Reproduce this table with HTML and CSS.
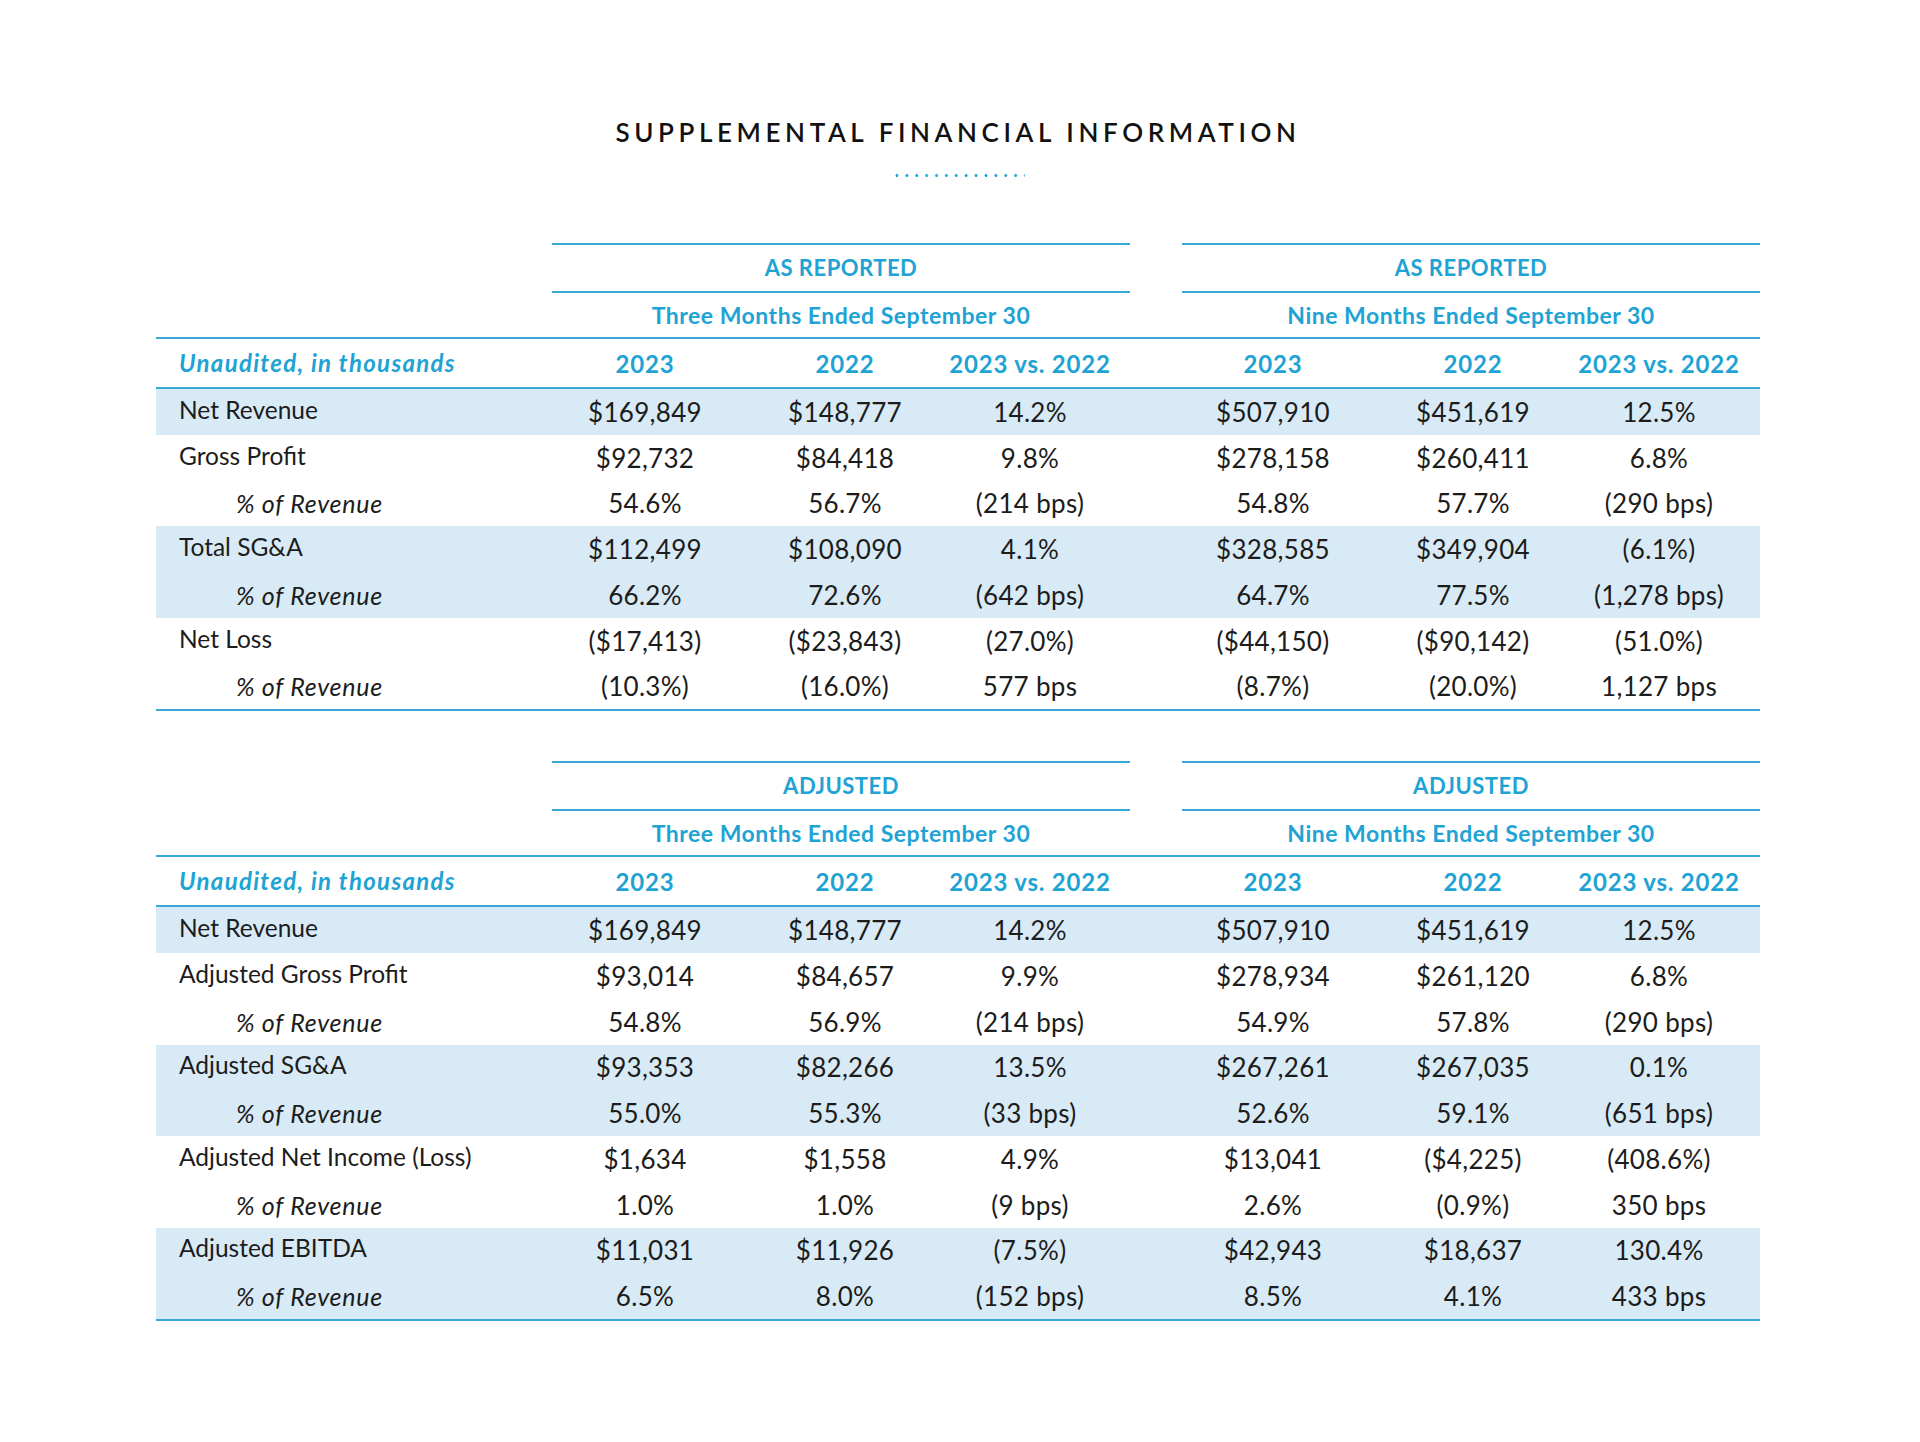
FILE: index.html
```html
<!DOCTYPE html>
<html lang="en">
<head>
    <meta charset="UTF-8">
    <meta name="viewport" content="width=device-width, initial-scale=1.0">
    <title>Supplemental Financial Information</title>
    <link rel="stylesheet" href="styles.css">
</head>
<body>
<main class="page">
    <h1 class="title">SUPPLEMENTAL FINANCIAL INFORMATION</h1>
    <div class="dots"></div>

    <!-- as reported -->
    <section class="fin-table">
        <div class="groups">
            <div class="group">
                <div class="group-title">AS REPORTED</div>
                <div class="group-period">Three Months Ended September 30</div>
            </div>
            <div class="group">
                <div class="group-title">AS REPORTED</div>
                <div class="group-period">Nine Months Ended September 30</div>
            </div>
        </div>

        <div class="row col-head">
            <div class="label">Unaudited, in thousands</div>
            <div>2023</div><div>2022</div><div>2023 vs. 2022</div>
            <div>2023</div><div>2022</div><div>2023 vs. 2022</div>
        </div>

        <div class="block shade">
            <div class="row">
                <div class="label">Net Revenue</div>
                <div>$169,849</div><div>$148,777</div><div>14.2%</div>
                <div>$507,910</div><div>$451,619</div><div>12.5%</div>
            </div>
        </div>
        <div class="block">
            <div class="row">
                <div class="label">Gross Profit</div>
                <div>$92,732</div><div>$84,418</div><div>9.8%</div>
                <div>$278,158</div><div>$260,411</div><div>6.8%</div>
            </div>
            <div class="row">
                <div class="label sub">% of Revenue</div>
                <div>54.6%</div><div>56.7%</div><div>(214 bps)</div>
                <div>54.8%</div><div>57.7%</div><div>(290 bps)</div>
            </div>
        </div>
        <div class="block shade">
            <div class="row">
                <div class="label">Total SG&amp;A</div>
                <div>$112,499</div><div>$108,090</div><div>4.1%</div>
                <div>$328,585</div><div>$349,904</div><div>(6.1%)</div>
            </div>
            <div class="row">
                <div class="label sub">% of Revenue</div>
                <div>66.2%</div><div>72.6%</div><div>(642 bps)</div>
                <div>64.7%</div><div>77.5%</div><div>(1,278 bps)</div>
            </div>
        </div>
        <div class="block last">
            <div class="row">
                <div class="label">Net Loss</div>
                <div>($17,413)</div><div>($23,843)</div><div>(27.0%)</div>
                <div>($44,150)</div><div>($90,142)</div><div>(51.0%)</div>
            </div>
            <div class="row">
                <div class="label sub">% of Revenue</div>
                <div>(10.3%)</div><div>(16.0%)</div><div>577 bps</div>
                <div>(8.7%)</div><div>(20.0%)</div><div>1,127 bps</div>
            </div>
        </div>
    </section>

    <!-- adjusted -->
    <section class="fin-table second">
        <div class="groups">
            <div class="group">
                <div class="group-title">ADJUSTED</div>
                <div class="group-period">Three Months Ended September 30</div>
            </div>
            <div class="group">
                <div class="group-title">ADJUSTED</div>
                <div class="group-period">Nine Months Ended September 30</div>
            </div>
        </div>

        <div class="row col-head">
            <div class="label">Unaudited, in thousands</div>
            <div>2023</div><div>2022</div><div>2023 vs. 2022</div>
            <div>2023</div><div>2022</div><div>2023 vs. 2022</div>
        </div>

        <div class="block shade">
            <div class="row">
                <div class="label">Net Revenue</div>
                <div>$169,849</div><div>$148,777</div><div>14.2%</div>
                <div>$507,910</div><div>$451,619</div><div>12.5%</div>
            </div>
        </div>
        <div class="block">
            <div class="row">
                <div class="label">Adjusted Gross Profit</div>
                <div>$93,014</div><div>$84,657</div><div>9.9%</div>
                <div>$278,934</div><div>$261,120</div><div>6.8%</div>
            </div>
            <div class="row">
                <div class="label sub">% of Revenue</div>
                <div>54.8%</div><div>56.9%</div><div>(214 bps)</div>
                <div>54.9%</div><div>57.8%</div><div>(290 bps)</div>
            </div>
        </div>
        <div class="block shade">
            <div class="row">
                <div class="label">Adjusted SG&amp;A</div>
                <div>$93,353</div><div>$82,266</div><div>13.5%</div>
                <div>$267,261</div><div>$267,035</div><div>0.1%</div>
            </div>
            <div class="row">
                <div class="label sub">% of Revenue</div>
                <div>55.0%</div><div>55.3%</div><div>(33 bps)</div>
                <div>52.6%</div><div>59.1%</div><div>(651 bps)</div>
            </div>
        </div>
        <div class="block">
            <div class="row">
                <div class="label">Adjusted Net Income (Loss)</div>
                <div>$1,634</div><div>$1,558</div><div>4.9%</div>
                <div>$13,041</div><div>($4,225)</div><div>(408.6%)</div>
            </div>
            <div class="row">
                <div class="label sub">% of Revenue</div>
                <div>1.0%</div><div>1.0%</div><div>(9 bps)</div>
                <div>2.6%</div><div>(0.9%)</div><div>350 bps</div>
            </div>
        </div>
        <div class="block shade last">
            <div class="row">
                <div class="label">Adjusted EBITDA</div>
                <div>$11,031</div><div>$11,926</div><div>(7.5%)</div>
                <div>$42,943</div><div>$18,637</div><div>130.4%</div>
            </div>
            <div class="row">
                <div class="label sub">% of Revenue</div>
                <div>6.5%</div><div>8.0%</div><div>(152 bps)</div>
                <div>8.5%</div><div>4.1%</div><div>433 bps</div>
            </div>
        </div>
    </section>
</main>
</body>
</html>
```

FILE: styles.css
```css
body {
	margin: 0;
	background-color: #fff;
	color: #1c1c1c;
	font-family: Lato, "Liberation Sans", sans-serif;
}

.page {
	width: 1604px;
	margin-left: 156px;
	padding-top: 116px;
}

.title {
	margin: 0;
	height: 32px;
	line-height: 32px;
	text-align: center;
	font-size: 26px;
	font-weight: 600;
	letter-spacing: 4.6px;
	color: #111;
}

.dots {
	width: 133px;
	height: 3px;
	margin: 26px auto 0;
	background: radial-gradient(circle, #1ea3d4 1.2px, transparent 1.7px) repeat-x;
	background-size: 9.9px 3px;
}

.fin-table {
	margin-top: 66px;
}

.fin-table.second {
	margin-top: 50px;
}

/* group headers */
.groups {
	display: grid;
	grid-template-columns: 396px 578px 52px 578px;
}

.group {
	border-top: 2px solid #36a9d6;
	color: #1ea3d4;
	font-weight: 700;
	text-align: center;
}

.group:first-child {
	grid-column: 2;
}

.group:last-child {
	grid-column: 4;
}

.group-title {
	height: 46px;
	line-height: 46px;
	font-size: 22px;
	letter-spacing: 0.5px;
	border-bottom: 2px solid #36a9d6;
}

.group-period {
	height: 44px;
	line-height: 44px;
	font-size: 23px;
	letter-spacing: 0.5px;
}

/* rows */
.row {
	display: grid;
	grid-template-columns: 396px 186px 214px 156px 74px 182px 218px 154px 24px;
	align-items: center;
	height: 45.75px;
	font-size: 26px;
	letter-spacing: 0.3px;
}

.row > div {
	justify-self: center;
	white-space: nowrap;
}

.row > :nth-child(5) {
	grid-column: 6;
}

.row > .label {
	justify-self: stretch;
	padding-left: 23px;
	padding-bottom: 5px;
	font-size: 24.5px;
	letter-spacing: 0;
}

.row > .label.sub {
	padding-left: 80px;
	padding-bottom: 0;
	font-style: italic;
	font-size: 25px;
	letter-spacing: 0.7px;
}

.col-head {
	height: 48px;
	border-top: 2px solid #36a9d6;
	border-bottom: 2px solid #36a9d6;
	color: #1ea3d4;
	font-weight: 700;
	font-size: 24px;
	letter-spacing: 0.8px;
}

.col-head > .label {
	padding-bottom: 2px;
	font-style: italic;
	font-size: 24px;
	letter-spacing: 1.3px;
}

.block.shade {
	background-color: #d8eaf5;
}

.block.last {
	border-bottom: 2px solid #36a9d6;
}
```
